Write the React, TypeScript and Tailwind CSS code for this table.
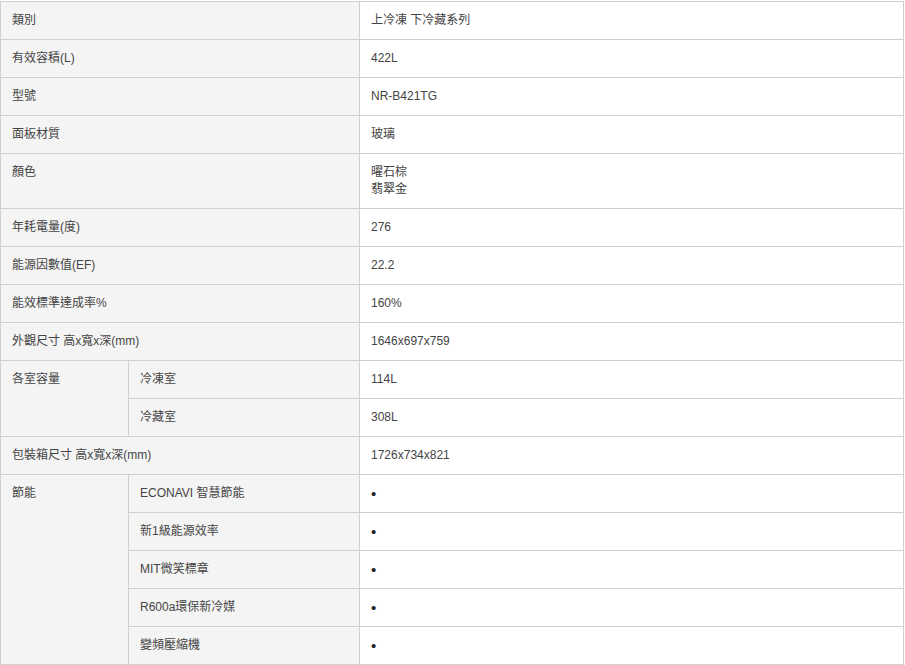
const simple: [string, string[]][] = [
  ["類別", ["上冷凍 下冷藏系列"]],
  ["有效容積(L)", ["422L"]],
  ["型號", ["NR-B421TG"]],
  ["面板材質", ["玻璃"]],
  ["顏色", ["曜石棕", "翡翠金"]],
  ["年耗電量(度)", ["276"]],
  ["能源因數值(EF)", ["22.2"]],
  ["能效標準達成率%", ["160%"]],
  ["外觀尺寸 高x寬x深(mm)", ["1646x697x759"]],
];

const rooms = [
  ["冷凍室", "114L"],
  ["冷藏室", "308L"],
];

const saving = ["ECONAVI 智慧節能", "新1級能源效率", "MIT微笑標章", "R600a環保新冷媒", "變頻壓縮機"];

const cell = "border border-[#cfcfcf] px-[11px] py-[10px] align-top leading-[17px]";
const label = `${cell} bg-[#f4f4f4]`;

export default function App() {
  return (
    <div className="min-h-screen bg-white pt-px">
      <table
        className="w-[904px] table-fixed border-collapse text-left text-[12px] text-[#444]"
        style={{ fontFamily: '"Liberation Sans", Arial, "Noto Sans CJK TC", sans-serif' }}
      >
        <colgroup>
          <col className="w-[128px]" />
          <col className="w-[231px]" />
          <col />
        </colgroup>
        <tbody>
          {simple.map(([k, v]) => (
            <tr key={k}>
              <td colSpan={2} className={label}>{k}</td>
              <td className={cell}>
                {v.map((line) => (
                  <div key={line}>{line}</div>
                ))}
              </td>
            </tr>
          ))}
          {rooms.map(([k, v], i) => (
            <tr key={k}>
              {i === 0 && (
                <td rowSpan={2} className={label}>各室容量</td>
              )}
              <td className={label}>{k}</td>
              <td className={cell}>{v}</td>
            </tr>
          ))}
          <tr>
            <td colSpan={2} className={label}>包裝箱尺寸 高x寬x深(mm)</td>
            <td className={cell}>1726x734x821</td>
          </tr>
          {saving.map((k, i) => (
            <tr key={k}>
              {i === 0 && (
                <td rowSpan={5} className={label}>節能</td>
              )}
              <td className={label}>{k}</td>
              <td className={`${cell} text-[#222]`}>
                <span className="block h-[17px] text-[15px] leading-[17px]">•</span>
              </td>
            </tr>
          ))}
        </tbody>
      </table>
    </div>
  );
}
